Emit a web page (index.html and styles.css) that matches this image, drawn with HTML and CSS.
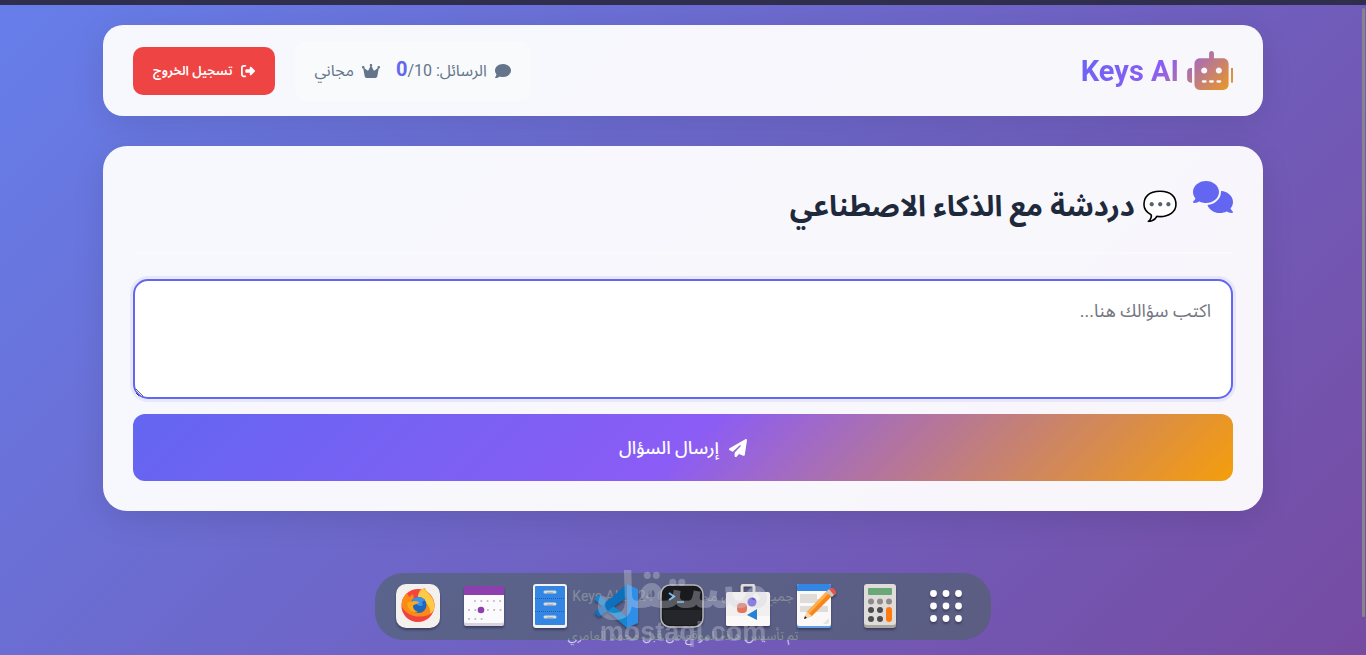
FILE: index.html
```html
<!DOCTYPE html>
<html lang="ar" dir="rtl">
<head>
    <meta charset="UTF-8">
    <meta name="viewport" content="width=device-width, initial-scale=1.0">
    <title>Keys AI</title>
    <link rel="stylesheet" href="styles.css">
</head>
<body>
    <div class="top-strip"></div>

    <div class="container">
        <header class="header">
            <div class="logo">
                <svg class="logo-icon" viewBox="0 0 600 512">
                    <defs>
                        <linearGradient id="logoGradient" gradientUnits="userSpaceOnUse" x1="-1056" y1="-407" x2="270" y2="919">
                            <stop offset="0" stop-color="#6366f1"/>
                            <stop offset="0.5" stop-color="#8b5cf6"/>
                            <stop offset="1" stop-color="#f59e0b"/>
                        </linearGradient>
                    </defs>
                    <path fill="url(#logoGradient)" d="M320 0c17.700 0 32 14.300 32 32V96H472c39.800 0 72 32.200 72 72V440c0 39.800-32.200 72-72 72H168c-39.800 0-72-32.200-72-72V168c0-39.800 32.200-72 72-72H288V32c0-17.700 14.300-32 32-32zM208 384c-8.800 0-16 7.200-16 16s7.200 16 16 16h32c8.800 0 16-7.200 16-16s-7.200-16-16-16H208zm96 0c-8.800 0-16 7.200-16 16s7.200 16 16 16h32c8.800 0 16-7.200 16-16s-7.200-16-16-16H304zm96 0c-8.800 0-16 7.200-16 16s7.200 16 16 16h32c8.800 0 16-7.200 16-16s-7.200-16-16-16H400zM264 256c0-22.100-17.900-40-40-40s-40 17.900-40 40s17.900 40 40 40s40-17.900 40-40zm152 40c22.100 0 40-17.900 40-40s-17.900-40-40-40s-40 17.900-40 40s17.900 40 40 40zM48 224H64V416H48c-26.500 0-48-21.500-48-48V272c0-26.500 21.500-48 48-48zm544 0c26.500 0 48 21.500 48 48v96c0 26.500-21.500 48-48 48H576V224h16z"/>
                </svg>
                <span>Keys AI</span>
            </div>
            <div class="user-info">
                <div class="stats">
                    <svg class="icon" viewBox="0 0 512 512"><path d="M512 240c0 114.900-114.600 208-256 208c-37.100 0-72.300-6.400-104.100-17.900c-11.900 8.700-31.300 20.600-54.300 30.600C73.600 471.100 44.700 480 16 480c-6.500 0-12.300-3.900-14.800-9.900c-2.500-6-1.100-12.800 3.400-17.400c.4-.4 .7-.7 1.300-1.400c1.100-1.200 2.800-3.100 4.900-5.700c4.100-5 9.600-12.400 15.200-21.600c10-16.600 19.500-38.400 21.400-62.900C17.700 326.800 0 285.100 0 240C0 125.100 114.600 32 256 32s256 93.100 256 208z"/></svg>
                    <span>الرسائل: <strong class="count">0</strong>/10</span>
                    <svg class="icon crown" viewBox="0 0 576 512"><path d="M309 106c11.400-7 19-19.700 19-34c0-22.100-17.900-40-40-40s-40 17.900-40 40c0 14.400 7.600 27 19 34L209.700 220.600c-9.100 18.200-32.700 23.400-48.600 10.700L72 160c5-6.700 8-15 8-24c0-22.100-17.900-40-40-40S0 113.900 0 136s17.900 40 40 40c.2 0 .5 0 .7 0L86.400 427.400c5.500 30.400 32 52.600 63 52.600H426.600c30.900 0 57.400-22.100 63-52.600L535.300 176c.2 0 .5 0 .7 0c22.100 0 40-17.900 40-40s-17.900-40-40-40s-40 17.900-40 40c0 9 3 17.300 8 24l-89.100 71.300c-15.900 12.700-39.500 7.500-48.600-10.700L309 106z"/></svg>
                    <span>مجاني</span>
                </div>
                <button class="logout-btn" type="button">
                    <svg class="icon" viewBox="0 0 512 512"><path d="M377.900 105.900L500.700 228.700c7.200 7.200 11.300 17.100 11.300 27.300s-4.100 20.100-11.300 27.300L377.900 406.100c-6.400 6.400-15 9.900-24 9.900c-18.700 0-33.900-15.200-33.900-33.900l0-62.100-128 0c-17.700 0-32-14.300-32-32l0-64c0-17.700 14.300-32 32-32l128 0 0-62.100c0-18.700 15.200-33.900 33.900-33.900c9 0 17.600 3.600 24 9.900zM160 96L96 96c-17.700 0-32 14.300-32 32l0 256c0 17.700 14.300 32 32 32l64 0c17.700 0 32 14.300 32 32s-14.300 32-32 32l-64 0c-53 0-96-43-96-96L0 128C0 75 43 32 96 32l64 0c17.700 0 32 14.300 32 32s-14.300 32-32 32z"/></svg>
                    تسجيل الخروج
                </button>
            </div>
        </header>

        <main class="chat">
            <div class="chat-header">
                <svg class="chat-icon" viewBox="0 0 640 512"><path d="M208 352c114.900 0 208-78.800 208-176S322.900 0 208 0S0 78.800 0 176c0 38.600 14.700 74.300 39.600 103.400c-3.500 9.400-8.700 17.700-14.200 24.700c-4.800 6.200-9.700 11-13.300 14.300c-1.800 1.600-3.300 2.900-4.300 3.700c-.5 .4-.9 .7-1.100 .8l-.2 .2C1 327.200-1.400 334.400 .8 340.900S9.100 352 16 352c21.800 0 43.800-5.600 62.100-12.500c9.200-3.500 17.800-7.400 25.200-11.400C134.100 343.300 169.800 352 208 352zM448 176c0 112.300-99.100 196.900-216.500 207C255.800 457.400 336.400 512 432 512c38.200 0 73.900-8.700 104.700-23.900c7.500 4 16 7.900 25.200 11.400c18.300 6.900 40.300 12.500 62.100 12.500c6.900 0 13.100-4.500 15.200-11.100c2.100-6.600-.2-13.800-5.800-17.900l-.2-.2c-.2-.2-.6-.4-1.100-.8c-1-.8-2.500-2-4.300-3.700c-3.600-3.300-8.500-8.100-13.300-14.300c-5.500-7-10.700-15.400-14.200-24.700c24.900-29 39.600-64.700 39.600-103.400c0-92.800-84.900-168.900-192.600-175.500c.4 5.100 .6 10.300 .6 15.500z"/></svg>
                <h2>💬 دردشة مع الذكاء الاصطناعي</h2>
            </div>
            <form class="chat-form">
                <textarea class="question" aria-label="اكتب سؤالك هنا" placeholder="اكتب سؤالك هنا..."></textarea>
                <button class="send-btn" type="button">
                    <svg class="icon" viewBox="0 0 512 512"><path d="M498.100 5.600c10.100 7 15.400 19.100 13.500 31.200l-64 416c-1.500 9.700-7.400 18.200-16 23s-18.900 5.400-28 1.600L284 427.700l-68.500 74.100c-8.900 9.700-22.900 12.900-35.200 8.100S160 493.200 160 480V396.400c0-4 1.500-7.800 4.200-10.700L331.800 202.800c5.800-6.300 5.600-16-.4-22s-15.700-6.400-22-.7L106 360.800 17.700 316.600C7.100 311.300 .3 300.700 0 288.900s5.900-22.800 16.100-28.700l448-256c10.700-6.100 23.900-5.500 34 1.400z"/></svg>
                    إرسال السؤال
                </button>
            </form>
        </main>

        <footer class="footer">
            <p>جميع الحقوق محفوظة © 2024 Keys AI</p>
            <p class="credit">تم تأسيس هاذا الموقع من قبل محمد العامري</p>
        </footer>
    </div>

    <!-- dock -->
    <nav class="dock">
        <button class="dock-item" type="button" aria-label="Firefox">
            <svg viewBox="0 0 44 44">
                <rect width="44" height="44" rx="10" fill="#f3f0ee"/>
                <circle cx="22" cy="21.500" r="16.500" fill="#f5443c"/>
                <path d="M6 23C5 17 7 13 11 9l2 4 4-3 1 5 6-3c0-4 2-7 5-8 0 4 8 6 9.500 16 0 7-5 11-9 13-9 2-20 0-23.500-10z" fill="#fb8a16"/>
                <path d="M22 13c0-5 3-8 6-9 1 4 10 7 10.500 18 0 4-2 6-4 8 0-8-4-12-12.500-17z" fill="#fdca48"/>
                <path d="M5.500 23c6 8 14 12 27 8-6 10-24 9-27-8z" fill="#f0433f"/>
                <circle cx="22.500" cy="21" r="8" fill="#1b68bd"/>
                <path d="M16 16c4-4 9-4 13 0l-3 2 1 3c-4 3-6-1-11-5z" fill="#3b91ee"/>
                <path d="M11 19c4-2 8-3 12-1 0 2-5 2-6 4 0 3 2 5 5 6-6 1-10-2-11-9z" fill="#fca91c"/>
            </svg>
        </button>
        <button class="dock-item" type="button" aria-label="Calendar">
            <svg viewBox="0 0 44 44">
                <rect x="2" y="8" width="40" height="34" rx="2" fill="#d8d3df"/>
                <rect x="2" y="5" width="40" height="34" rx="2" fill="#fbfafc"/>
                <path d="M2 11V4q0-2 2-2h36q2 0 2 2v7z" fill="#8e3fae"/>
                <path d="M13 17h26" stroke="#b9b6bf" stroke-width="2" stroke-dasharray="0 6.300" stroke-linecap="round"/>
                <path d="M7 26h33M7 35h14" stroke="#b9b6bf" stroke-width="2" stroke-dasharray="0 6.300" stroke-linecap="round"/>
                <circle cx="19" cy="26" r="3.300" fill="#8e3fae"/>
            </svg>
        </button>
        <button class="dock-item" type="button" aria-label="Files">
            <svg viewBox="0 0 44 44">
                <rect x="5" width="34" height="44" rx="3" fill="#f4f3f2"/>
                <rect x="7" y="2" width="30" height="39" rx="1" fill="#3486e4"/>
                <path d="M7 14.500h30M7 27.500h30" stroke="#1a5fb4" stroke-width="1" stroke-dasharray="1 1"/>
                <path d="M17 8h10M17 20h10M17 33h10" stroke="#dcdad8" stroke-width="3" stroke-linecap="round"/>
                <path d="M19 9h6M19 21h6M19 34h6" stroke="#8a98ad" stroke-width="1"/>
            </svg>
        </button>
        <button class="dock-item" type="button" aria-label="Visual Studio Code">
            <svg viewBox="0 0 44 44">
                <path d="M0 15l5-4 31 24-3 9z" fill="#1587d0"/>
                <path d="M0 29l5 4L36 11 33 0z" fill="#0d70bd"/>
                <path d="M33 0l11 5v34l-11 5z" fill="#2e8ee8"/>
            </svg>
        </button>
        <button class="dock-item" type="button" aria-label="Terminal">
            <svg viewBox="0 0 44 44">
                <rect x="1" y="1" width="42" height="42" rx="9" fill="#191a1d" stroke="#b8b8bc" stroke-width="1.500"/>
                <path d="M3 26h38v6q0 9-9 9H12q-9 0-9-9z" fill="#24262b"/>
                <path d="M9 9l5 3.500L9 16" fill="none" stroke="#71b7ef" stroke-width="2"/>
                <path d="M17 18h7" stroke="#71b7ef" stroke-width="1.500"/>
            </svg>
        </button>
        <button class="dock-item" type="button" aria-label="Software">
            <svg viewBox="0 0 44 44">
                <path d="M16 9V3q0-2 2-2h8q2 0 2 2v6" fill="none" stroke="#dedbd8" stroke-width="3"/>
                <rect y="8" width="44" height="34" rx="2" fill="#f2f0ee"/>
                <path d="M0 32h44v8q0 2-2 2H2q-2 0-2-2z" fill="#faf9f8"/>
                <circle cx="26" cy="18" r="4.500" fill="#6557d8"/>
                <rect x="11" y="19" width="10" height="10" rx="4" fill="#e17761"/>
                <path d="M31 25v11l-10-5z" fill="#2682d6"/>
            </svg>
        </button>
        <button class="dock-item" type="button" aria-label="Text Editor">
            <svg viewBox="0 0 44 44">
                <rect x="5" y="1" width="34" height="43" rx="2" fill="#62a0ea"/>
                <rect x="5" width="34" height="42" rx="2" fill="#faf9f8"/>
                <path d="M5 7V2q0-2 2-2h30q2 0 2 2v5z" fill="#3486e4"/>
                <path d="M8 10h17v5h5v4H8zM8 22h28v6H8z" fill="#dedbd8"/>
                <path d="M12 35l3-7L35 7l5 5-20 20z" fill="#fb851d"/>
                <path d="M15 28L35 7l2 2-20 21z" fill="#ffb04a"/>
                <path d="M34 8l3-3 6 5-3 3z" fill="#c9c6c4"/>
                <path d="M37 5q3-3 6 1t-1 5z" fill="#e5554b"/>
                <path d="M12 35l3-7 5 4z" fill="#f5d8ae"/>
                <path d="M12 35l1-3 2 2z" fill="#222"/>
                <path d="M31 40l6-6v4q0 2-2 2z" fill="#e6e4e2"/>
            </svg>
        </button>
        <button class="dock-item" type="button" aria-label="Calculator">
            <svg viewBox="0 0 44 44">
                <rect x="6" y="2" width="32" height="42" rx="3" fill="#aaa6a2"/>
                <rect x="6" width="32" height="41" rx="3" fill="#e0dcd9"/>
                <rect x="10" y="4" width="24" height="7" rx="1" fill="#6aa878"/>
                <g fill="#8d8b8b"><circle cx="13" cy="17.500" r="3"/><circle cx="22" cy="17.500" r="3"/><circle cx="31" cy="17.500" r="3"/></g>
                <g fill="#4c4c50"><circle cx="13" cy="26" r="3"/><circle cx="22" cy="26" r="3"/><circle cx="13" cy="35" r="3"/><circle cx="22" cy="35" r="3"/></g>
                <rect x="28" y="23" width="6" height="15" rx="3" fill="#ff7b12"/>
            </svg>
        </button>
        <button class="dock-item" type="button" aria-label="Show applications">
            <svg viewBox="0 0 44 44" fill="#fff">
                <circle cx="9.500" cy="9.500" r="3.400"/><circle cx="22" cy="9.500" r="3.400"/><circle cx="34.500" cy="9.500" r="3.400"/>
                <circle cx="9.500" cy="22" r="3.400"/><circle cx="22" cy="22" r="3.400"/><circle cx="34.500" cy="22" r="3.400"/>
                <circle cx="9.500" cy="34.500" r="3.400"/><circle cx="22" cy="34.500" r="3.400"/><circle cx="34.500" cy="34.500" r="3.400"/>
            </svg>
        </button>
    </nav>

    <div class="watermark">
        <span class="watermark-ar">مستقل</span>
        <span class="watermark-en">mostaql.com</span>
    </div>
    <div class="scroll-thumb"></div>
</body>
</html>
```
FILE: styles.css
```css
* {
    box-sizing: border-box;
    margin: 0;
    padding: 0;
}

body {
    font-family: Roboto, "Noto Sans Arabic", "Noto Sans", sans-serif;
    background: linear-gradient(135deg, #667eea 0%, #764ba2 100%) no-repeat;
    min-height: 100vh;
    color: #1e293b;
}

button, textarea {
    font-family: inherit;
}

.top-strip {
    height: 5px;
    background-color: #2f2f4d;
}

.container {
    max-width: 1200px;
    margin: 0 auto;
    padding: 20px 20px 0;
}

/* Header */
.header {
    display: flex;
    justify-content: space-between;
    align-items: center;
    min-height: 91px;
    padding: 15px 30px;
    margin-bottom: 30px;
    border-radius: 20px;
    background-color: rgba(255, 255, 255, 0.95);
    box-shadow: 0 8px 32px rgba(0, 0, 0, 0.1);
}

.logo {
    display: flex;
    align-items: center;
    gap: 8px;
    height: 50px;
    font-size: 29px;
    font-weight: 700;
    background: linear-gradient(135deg, #6366f1 0%, #8b5cf6 50%, #f59e0b 100%);
    -webkit-background-clip: text;
    background-clip: text;
    color: transparent;
}

.logo-icon {
    width: 46px;
    height: 39px;
}

.user-info {
    display: flex;
    align-items: center;
    gap: 20px;
}

.stats {
    display: flex;
    align-items: center;
    gap: 8px;
    height: 60px;
    padding: 0 20px;
    border-radius: 12px;
    background-color: #f8fafc;
    color: #64748b;
    font-size: 16px;
}

.icon {
    width: 16px;
    height: 16px;
    fill: currentColor;
}

.crown {
    width: 18px;
    margin-right: 8px;
}

.count {
    color: #6366f1;
    font-size: 20px;
}

.logout-btn {
    display: flex;
    align-items: center;
    gap: 8px;
    height: 48px;
    padding: 0 20px;
    border: none;
    border-radius: 10px;
    background-color: #ef4444;
    color: #fff;
    font-size: 13px;
    font-weight: 600;
    cursor: pointer;
}

.logout-btn .icon {
    width: 14px;
    height: 14px;
}

/* Chat */
.chat {
    padding: 30px;
    border-radius: 24px;
    background-color: rgba(255, 255, 255, 0.95);
    box-shadow: 0 8px 32px rgba(0, 0, 0, 0.1);
}

.chat-header {
    display: flex;
    align-items: flex-start;
    gap: 15px;
    padding: 5px 0 20px;
    margin-bottom: 25px;
    border-bottom: 2px solid #f8fafc;
}

.chat-icon {
    width: 40px;
    height: 32px;
    fill: #6366f1;
}

.chat-header h2 {
    font-size: 29px;
    line-height: 51px;
}

.chat-form {
    display: flex;
    flex-direction: column;
    gap: 15px;
}

.question {
    width: 100%;
    height: 120px;
    padding: 20px;
    border: 2px solid #6366f1;
    border-radius: 15px;
    outline: none;
    box-shadow: 0 0 0 3px rgba(99, 102, 241, 0.1);
    background-color: #fff;
    font-size: 18px;
    line-height: 20px;
    resize: vertical;
}

.question::placeholder {
    color: #757580;
}

.send-btn {
    display: flex;
    justify-content: center;
    align-items: center;
    gap: 10px;
    height: 67px;
    border: none;
    border-radius: 12px;
    background: linear-gradient(135deg, #6366f1 0%, #8b5cf6 50%, #f59e0b 100%);
    color: #fff;
    font-size: 18px;
    font-weight: 500;
    cursor: pointer;
}

.send-btn .icon {
    width: 18px;
    height: 18px;
}

/* Footer */
.footer {
    padding-top: 70px;
    text-align: center;
    color: rgba(255, 255, 255, 0.7);
    font-size: 14px;
    line-height: 30px;
}

.footer .credit {
    margin-top: 10px;
    font-size: 13px;
}

/* Dock */
.dock {
    position: fixed;
    left: 50%;
    bottom: 15px;
    transform: translateX(-50%);
    display: flex;
    direction: ltr;
    gap: 22px;
    padding: 11px 23px 12px 21px;
    border-radius: 28px;
    background-color: rgba(77, 99, 100, 0.6);
}

.dock-item {
    width: 44px;
    height: 44px;
    border: none;
    background: none;
    cursor: pointer;
}

.dock-item svg {
    display: block;
    filter: drop-shadow(0 2px 1px rgba(30, 30, 60, 0.5));
}

.watermark {
    position: fixed;
    left: 50%;
    bottom: 8px;
    transform: translateX(-50%);
    display: flex;
    flex-direction: column;
    align-items: center;
    color: #d2d2e1;
    opacity: 0.35;
    font-weight: 700;
    pointer-events: none;
}

.watermark-ar {
    font-size: 52px;
    line-height: 52px;
}

.watermark-en {
    font-family: "Liberation Sans", sans-serif;
    font-size: 27px;
    line-height: 30px;
}

.scroll-thumb {
    position: fixed;
    top: 8px;
    right: 1px;
    bottom: 38px;
    width: 3px;
    border-radius: 2px;
    background-color: #85858a;
}
```
